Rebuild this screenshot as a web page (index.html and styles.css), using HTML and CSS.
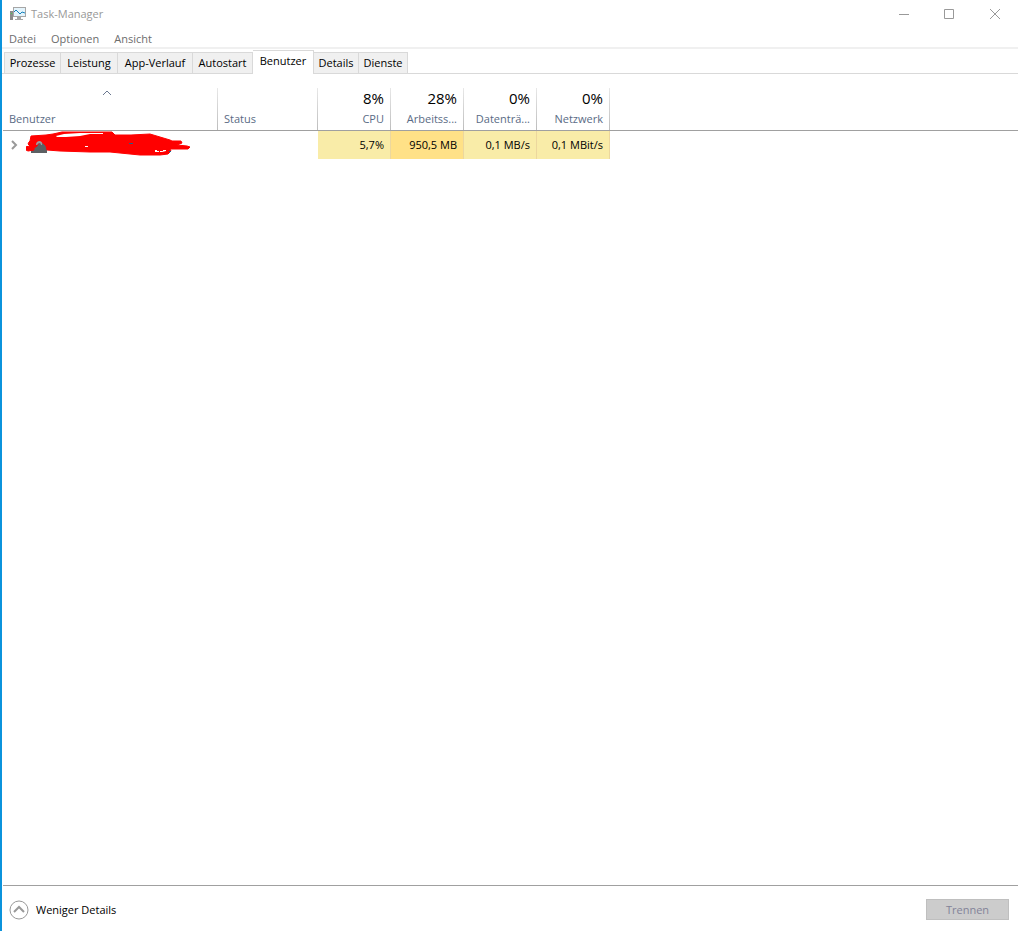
FILE: index.html
```html
<!DOCTYPE html>
<html lang="de">
<head>
<meta charset="utf-8">
<title>Task-Manager</title>
<link rel="stylesheet" href="styles.css">
</head>
<body>
<div class="window">
  <header class="titlebar">
    <svg class="app-icon" width="17" height="16" viewBox="0 0 17 16" aria-hidden="true">
      <path d="M1 5h3v9H1z" fill="#8b8b8b"/>
      <path d="M2 7h1v1H2z" fill="#43d649"/>
      <path d="M4 1h13v10H4z" fill="#a6a6a6"/>
      <path d="M5 2h11v8H5z" fill="#e4f4fc"/>
      <path d="M5 6l2-2 2 2 2 2 2-2 3 1" fill="none" stroke="#1783bd"/>
      <path d="M8 11h4v2h2v1H6v-1h2z" fill="#a6a6a6"/>
    </svg>
    <h1 class="title">Task-Manager</h1>
    <div class="window-buttons">
      <button class="window-button" aria-label="Minimieren"><svg width="12" height="12" viewBox="0 0 12 12"><path d="M2 6.500h10"/></svg></button>
      <button class="window-button" aria-label="Maximieren"><svg width="12" height="12" viewBox="0 0 12 12"><path d="M1.500 1.500h9v9h-9z"/></svg></button>
      <button class="window-button" aria-label="Schließen"><svg width="12" height="12" viewBox="0 0 12 12"><path d="M1 1l10 10M11 1L1 11"/></svg></button>
    </div>
  </header>
  <nav class="menubar">
    <button class="menu">Datei</button>
    <button class="menu">Optionen</button>
    <button class="menu">Ansicht</button>
  </nav>
  <div class="tabs" role="tablist">
    <button class="tab" role="tab">Prozesse</button>
    <button class="tab" role="tab">Leistung</button>
    <button class="tab" role="tab">App-Verlauf</button>
    <button class="tab" role="tab">Autostart</button>
    <button class="tab tab-active" role="tab" aria-selected="true">Benutzer</button>
    <button class="tab" role="tab">Details</button>
    <button class="tab" role="tab">Dienste</button>
  </div>
  <main class="content">
    <table class="users">
      <colgroup>
        <col class="col-user"><col class="col-status"><col class="col-value"><col class="col-value"><col class="col-value"><col class="col-value"><col>
      </colgroup>
      <thead>
        <tr>
          <th class="text-head"><svg class="sort" width="10" height="6" viewBox="0 0 10 6" aria-hidden="true"><path d="M1 5l4-4 4 4"/></svg>Benutzer</th>
          <th class="text-head">Status</th>
          <th class="value-head"><span class="total">8%</span>CPU</th>
          <th class="value-head"><span class="total">28%</span>Arbeitss...</th>
          <th class="value-head"><span class="total">0%</span>Datenträ...</th>
          <th class="value-head"><span class="total">0%</span>Netzwerk</th>
          <td class="filler"></td>
        </tr>
      </thead>
      <tbody>
        <tr>
          <td class="user">
            <div class="user-line">
              <button class="expand" aria-label="Erweitern"><svg width="7" height="10" viewBox="0 0 7 10"><path d="M1 1l4 4-4 4"/></svg></button>
              <svg class="scribble" width="166" height="28" viewBox="0 0 166 28" aria-hidden="true">
                <path d="M5 9h16v13H5z" fill="#5c6063"/>
                <g fill="#f00" stroke="#f00" stroke-linejoin="round">
                  <path d="M5 5l15-1 7-1 9-2h50l3 3h16l19-1 10 3 10 3 2 1 9 0 1 2-5 2 10 1 3 1-2 2H144l1 2-3 3-8 1h-20l-30-3H64l-30-1-13-1-1-4-3-3-4-1-2 4-3 2 0 2-6 1-4-2 1-2 5-1-2-2 1-2 1-1z"/>
                </g>
                <path d="M10 14q0-4 4-4 3 1 2 4h-1q0-2-2-2l-2 2z" fill="#9a9da0"/>
                <path d="M30 5l8-2 16-1h23v1l-13 0-10 2-14 1-9 0zM59 15h3v1h-3z" fill="#fff"/>
                <path d="M129 19h2v1h2v1h-4zM134 20h3v-1h3v1l-4 1h-2z" fill="#fff"/>
                <path d="M103 12h4v1h-4zM143 20h2v1h-2z" fill="#245f86"/>
              </svg>
            </div>
          </td>
          <td></td>
          <td class="value">5,7%</td>
          <td class="value value-medium">950,5 MB</td>
          <td class="value">0,1 MB/s</td>
          <td class="value">0,1 MBit/s</td>
          <td></td>
        </tr>
      </tbody>
    </table>
  </main>
  <footer class="footer">
    <button class="fewer">
      <svg width="20" height="20" viewBox="0 0 20 20" aria-hidden="true"><circle cx="10" cy="10" r="9"/><path d="M5 12l5-5 5 5" stroke-width="2"/></svg>
      Weniger Details
    </button>
    <button class="disconnect" disabled>Trennen</button>
  </footer>
</div>
</body>
</html>
```
FILE: styles.css
```css
* { box-sizing: border-box; }
body {
  margin: 0;
  background: #fff;
  color: #000;
  font: 11px/16px "Open Sans", "Noto Sans", sans-serif;
}
button {
  margin: 0;
  padding: 0;
  border: 0;
  background: none;
  color: inherit;
  font: inherit;
}
svg { display: block; fill: none; }
.window {
  display: flex;
  flex-direction: column;
  min-height: 100vh;
  border-left: 2px solid #0b93dc;
}
.titlebar {
  display: flex;
  height: 28px;
  padding-left: 7px;
  align-items: center;
  gap: 5px;
  color: #999;
}
.title { margin: 0; font-size: 11px; font-weight: 400; }
.window-buttons { display: flex; margin-left: auto; }
.window-button {
  display: flex;
  width: 46px;
  height: 26px;
  align-items: center;
  justify-content: center;
  stroke: #999;
}
.menubar {
  display: flex;
  height: 21px;
  padding: 2px 0 0 7px;
  gap: 15px;
  border-bottom: 2px solid #f0f0f0;
  color: #6d6d6d;
}
.tabs {
  display: grid;
  grid-template-columns: 57px 57px 75px 60px 61px 45px 49px;
  height: 25px;
  padding-left: 2px;
  align-items: end;
  border-bottom: 1px solid #d9d9d9;
}
.tab {
  height: 21px;
  border: 1px solid #d9d9d9;
  border-width: 1px 1px 0 0;
  background: #f0f0f0;
  white-space: nowrap;
}
.tab:first-child { border-left-width: 1px; }
.tab-active {
  height: 24px;
  margin-bottom: -1px;
  padding-bottom: 3px;
  background: #fff;
}
.content { flex: 1; padding: 14px 0 0 1px; }
.users {
  width: 100%;
  table-layout: fixed;
  border-collapse: separate;
  border-spacing: 0;
}
.col-user { width: 215px; }
.col-status { width: 100px; }
.col-value { width: 73px; }
.users th, .users td { padding: 0 6px; }
.users th {
  height: 43px;
  padding-bottom: 3px;
  border-bottom: 1px solid #a0a0a0;
  background: linear-gradient(#e8e8e8, #bdbdbd) right / 1px 100% no-repeat;
  color: #5a6b85;
  font-weight: 400;
  vertical-align: bottom;
}
.users .value-head { padding-right: 7px; }
.users .filler { border-bottom: 1px solid #a0a0a0; }
.text-head { text-align: left; }
.value-head { text-align: right; white-space: nowrap; }
.sort { margin: 0 auto 15px 93px; stroke: #6b7890; }
.total { display: block; padding-bottom: 3px; color: #000; font-size: 15px; line-height: 20px; }
.users td { height: 28px; }
.users .user { padding: 0 0 0 8px; }
.user-line { display: flex; align-items: center; gap: 8px; }
.expand { stroke: #999; stroke-width: 2px; }
.value {
  border-right: 1px solid #ecd79e;
  background: #f9eca8;
  text-align: right;
  white-space: nowrap;
}
.value-medium { background: #ffe187; }
.footer {
  display: flex;
  height: 46px;
  margin-left: 1px;
  padding: 2px 9px 0 6px;
  align-items: center;
  justify-content: space-between;
  border-top: 1px solid #a0a0a0;
}
.fewer { display: flex; align-items: center; gap: 7px; }
.fewer svg { stroke: #999; }
.disconnect {
  width: 83px;
  height: 21px;
  border: 1px solid #bfbfbf;
  background: #ccc;
  color: #838399;
}
```
